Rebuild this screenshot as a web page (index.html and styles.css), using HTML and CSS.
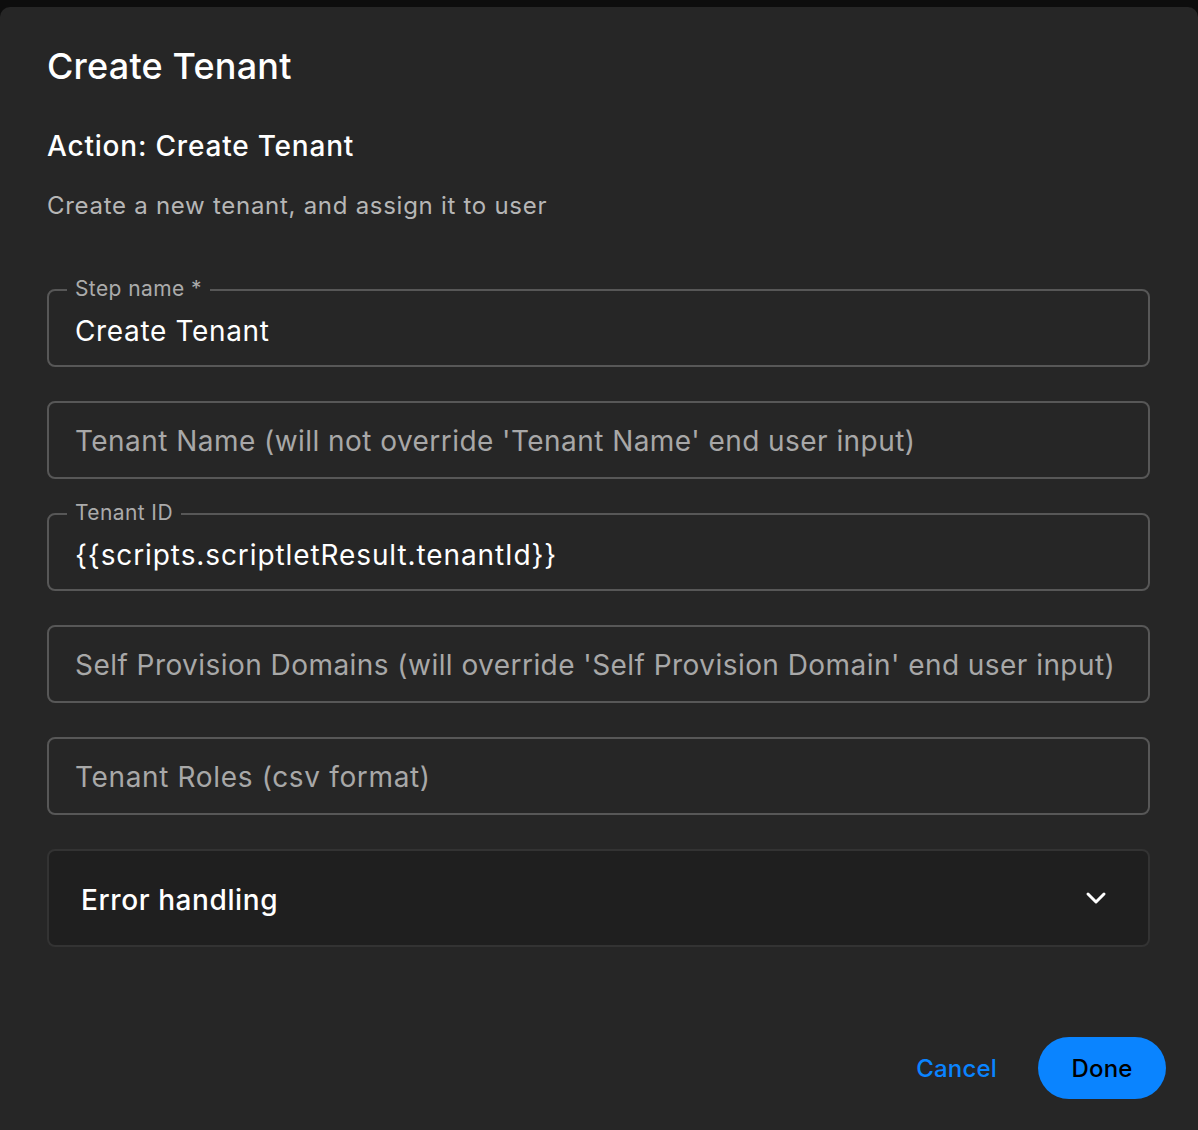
FILE: index.html
```html
<!DOCTYPE html>
<html lang="en">
<head>
<meta charset="utf-8">
<title>Create Tenant</title>
<link rel="stylesheet" href="styles.css">
</head>
<body>
<div class="dialog">
  <div class="content">
    <h1 class="title">Create Tenant</h1>
    <h2 class="subtitle">Action: Create Tenant</h2>
    <p class="desc">Create a new tenant, and assign it to user</p>
    <div class="form">
      <div class="field">
        <span class="label">Step name *</span>
        <span class="value">Create Tenant</span>
      </div>
      <div class="field">
        <span class="placeholder">Tenant Name (will not override 'Tenant Name' end user input)</span>
      </div>
      <div class="field">
        <span class="label">Tenant ID</span>
        <span class="value value-code">{{scripts.scriptletResult.tenantId}}</span>
      </div>
      <div class="field">
        <span class="placeholder">Self Provision Domains (will override 'Self Provision Domain' end user input)</span>
      </div>
      <div class="field">
        <span class="placeholder placeholder-short">Tenant Roles (csv format)</span>
      </div>
      <div class="accordion">
        <span class="acc-title">Error handling</span>
        <svg class="chevron" width="22" height="14" viewBox="0 0 22 14" aria-hidden="true">
          <path d="M3 3 L11 11 L19 3" fill="none" stroke="#ffffff" stroke-width="3" stroke-linecap="round" stroke-linejoin="round"/>
        </svg>
      </div>
    </div>
  </div>
  <div class="footer">
    <button class="btn-cancel">Cancel</button>
    <button class="btn-done">Done</button>
  </div>
</div>
</body>
</html>
```

FILE: styles.css
```css
* { box-sizing: border-box; }
html, body { margin: 0; padding: 0; }
body {
  background: #0d0d0d;
  font-family: Inter, "Noto Sans", sans-serif;
  color: #ffffff;
}
.dialog {
  margin-top: 7px;
  height: 1123px;
  background: #262626;
  border-radius: 10px 10px 0 0;
  display: flex;
  flex-direction: column;
}
.content {
  padding: 37px 48px 0 47px;
}
.title {
  margin: 0;
  font-size: 36px;
  line-height: 44px;
  font-weight: 500;
  color: #ffffff;
  letter-spacing: 0.2px;
}
.subtitle {
  margin: 40px 0 0;
  font-size: 28px;
  line-height: 36px;
  font-weight: 500;
  color: #ffffff;
  letter-spacing: 0.8px;
}
.desc {
  margin: 26px 0 0;
  font-size: 24px;
  line-height: 32px;
  color: #b6b6b6;
  letter-spacing: 0.72px;
}
.form {
  margin-top: 67px;
  display: flex;
  flex-direction: column;
  gap: 34px;
}
.field {
  position: relative;
  height: 78px;
  border: 2px solid #575757;
  border-radius: 8px;
  padding: 0 26px;
  display: flex;
  align-items: center;
}
.label {
  position: absolute;
  top: -15px;
  left: 18px;
  padding: 0 8px;
  background: #262626;
  font-size: 21px;
  line-height: 26px;
  color: #ababab;
  letter-spacing: 0.4px;
}
.value {
  font-size: 28px;
  line-height: 36px;
  color: #ffffff;
  padding-top: 6px;
  letter-spacing: 0.65px;
}
.value-code {
  letter-spacing: 0.9px;
}
.placeholder {
  font-size: 28px;
  line-height: 36px;
  color: #a8a8a8;
  padding-top: 2px;
  letter-spacing: 0.45px;
}
.placeholder-short {
  letter-spacing: 0.65px;
}
.accordion {
  height: 98px;
  background: #1f1f1f;
  border: 2px solid #333333;
  border-radius: 8px;
  padding: 0 41px 0 32px;
  display: flex;
  align-items: center;
  justify-content: space-between;
}
.acc-title {
  font-size: 28px;
  line-height: 36px;
  font-weight: 500;
  color: #ffffff;
  padding-top: 3px;
  letter-spacing: 0.6px;
}
.footer {
  margin-top: auto;
  padding: 0 32px 31px 0;
  display: flex;
  justify-content: flex-end;
  align-items: center;
  gap: 21px;
}
.btn-cancel, .btn-done {
  font-family: Inter, "Noto Sans", sans-serif;
  font-size: 24px;
  font-weight: 500;
  height: 62px;
  border: none;
  border-radius: 31px;
  cursor: pointer;
  letter-spacing: 0.2px;
}
.btn-cancel {
  background: transparent;
  color: #0a84ff;
  padding: 0 20px;
}
.btn-done {
  background: #0a84ff;
  color: #000000;
  width: 128px;
  padding: 0;
}
```
